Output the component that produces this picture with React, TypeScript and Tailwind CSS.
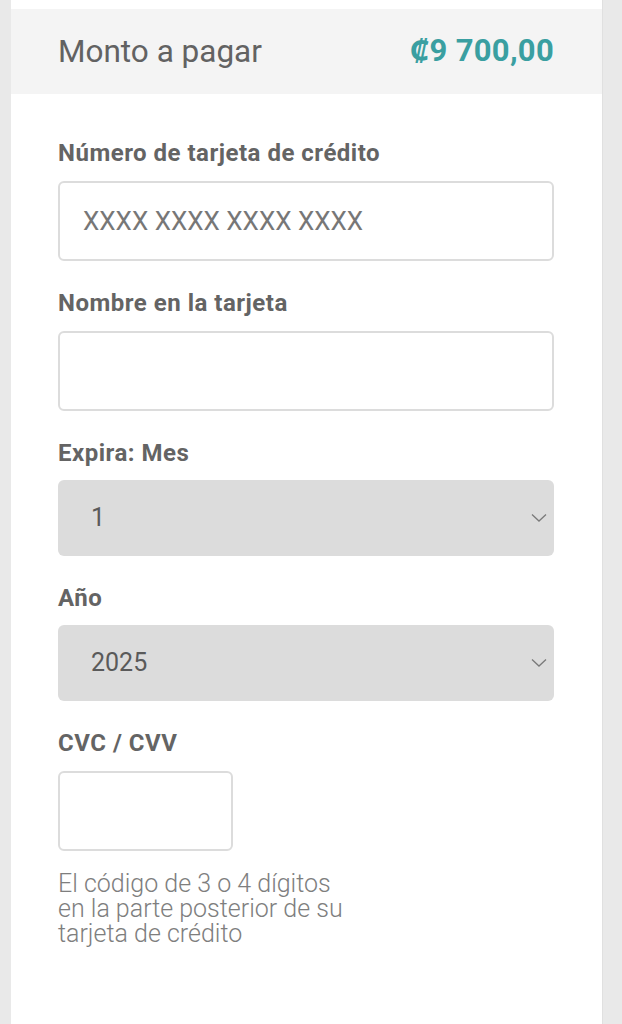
import React from "react";

const Chevron = () => (
  <svg width="16" height="10" viewBox="0 0 16 10" fill="none" className="shrink-0">
    <path d="M1 1.5 L8 8 L15 1.5" stroke="#7a7a7a" strokeWidth="1.3" />
  </svg>
);

export default function App() {
  return (
    <div
      className="min-h-[1024px] w-[622px] bg-[#e9e9e9] overflow-hidden"
      style={{ fontFamily: "Roboto, 'Noto Sans', sans-serif" }}
    >
      <div className="ml-[11px] w-[592px] min-h-[1024px] bg-white border-r border-[#e0e0e0] pt-[9px]">
        <div className="h-[85px] bg-[#f4f4f4] flex items-center justify-between pl-[47px] pr-[48px]">
          <span className="text-[31.5px] text-[#626262]">Monto a pagar</span>
          <span className="text-[31px] font-bold text-[#3a9fa1] tracking-[0.3px]">₡9 700,00</span>
        </div>

        <div className="pl-[47px] pr-[48px] pt-[47px] flex flex-col">
          <label className="text-[24px] leading-[24px] font-bold text-[#646464] tracking-[0.5px]">Número de tarjeta de crédito</label>
          <div className="mt-[16px] h-[80px] rounded-[6px] border-2 border-[#dcdcdc] flex items-center pl-[23px]">
            <span className="text-[26px] text-[#777777]">XXXX XXXX XXXX XXXX</span>
          </div>

          <label className="mt-[30px] text-[24px] leading-[24px] font-bold text-[#646464] tracking-[0.5px]">Nombre en la tarjeta</label>
          <div className="mt-[16px] h-[80px] rounded-[6px] border-2 border-[#dcdcdc]" />

          <label className="mt-[30px] text-[24px] leading-[24px] font-bold text-[#646464] tracking-[0.5px]">Expira: Mes</label>
          <div className="mt-[15px] h-[76px] rounded-[6px] bg-[#dcdcdc] flex items-center justify-between pl-[33px] pr-[7px]">
            <span className="text-[25px] text-[#5a5a5a]">1</span>
            <Chevron />
          </div>

          <label className="mt-[30px] text-[24px] leading-[24px] font-bold text-[#646464] tracking-[0.5px]">Año</label>
          <div className="mt-[15px] h-[76px] rounded-[6px] bg-[#dcdcdc] flex items-center justify-between pl-[33px] pr-[7px]">
            <span className="text-[25px] text-[#5a5a5a]">2025</span>
            <Chevron />
          </div>

          <label className="mt-[30px] text-[24px] leading-[24px] font-bold text-[#646464] tracking-[0.5px]">CVC / CVV</label>
          <div className="mt-[16px] w-[175px] h-[80px] rounded-[6px] border-2 border-[#dcdcdc]" />

          <p className="mt-[20px] w-[296px] text-[25px] leading-[25px] font-light text-[#7e7e7e]">
            El código de 3 o 4 dígitos en la parte posterior de su tarjeta de crédito
          </p>
        </div>
      </div>
    </div>
  );
}
